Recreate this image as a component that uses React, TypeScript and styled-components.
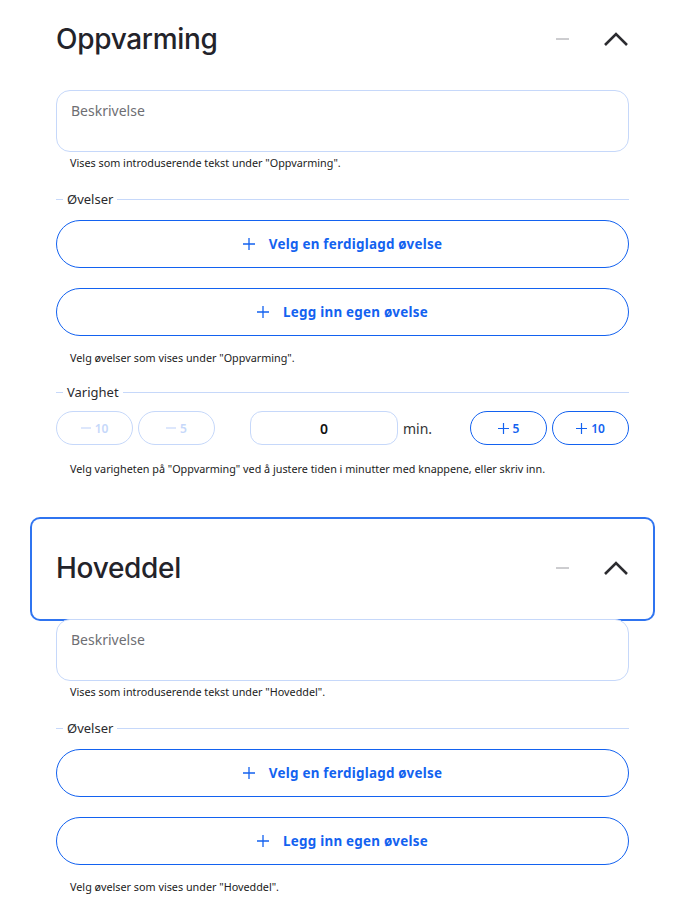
import styled, { createGlobalStyle, css } from 'styled-components';

const GlobalStyle = createGlobalStyle`
  html, body {
    margin: 0;
    padding: 0;
    background: #ffffff;
    font-family: "Noto Sans", "Open Sans", sans-serif;
    color: #1d1d1f;
  }
`;

const BLUE = '#1362f0';
const SOFT = '#c6d8fa';

const Page = styled.main`
  width: 573px;
  margin: -10px 0 0 56px;
  display: flex;
  flex-direction: column;
`;

const Section = styled.section`
  display: flex;
  flex-direction: column;
  padding-bottom: 43px;
`;

const Header = styled.div<{ $focused?: boolean }>`
  height: 100px;
  margin: 0 -24px;
  padding: 0 24px 2px 24px;
  box-sizing: border-box;
  display: flex;
  align-items: center;
  border-radius: 8px;
  ${(p) =>
    p.$focused &&
    css`
      box-shadow: 0 0 0 2px #2f74f0;
    `}
`;

const Title = styled.h2`
  flex: 1;
  margin: 0;
  font-family: Inter, "Noto Sans", sans-serif;
  font-weight: 500;
  font-size: 28px;
  letter-spacing: -0.3px;
  color: #23232a;
`;

const Controls = styled.div`
  display: flex;
  align-items: center;
  gap: 34px;
`;

const Description = styled.textarea`
  height: 62px;
  box-sizing: border-box;
  border: 1px solid ${SOFT};
  border-radius: 14px;
  padding: 10px 14px;
  resize: none;
  font-family: "Noto Sans", sans-serif;
  font-size: 14px;
  &::placeholder {
    color: #6e6e73;
  }
`;

const Help = styled.p<{ $top?: number }>`
  margin: ${(p) => p.$top ?? 4}px 0 0 14px;
  font-size: 10.8px;
  line-height: 14px;
  color: #222;
`;

const Group = styled.fieldset<{ $top: number }>`
  margin: ${(p) => p.$top}px 0 0;
  padding: 0;
  border: none;
  border-top: 1px solid ${SOFT};
  min-width: 0;
  display: flex;
  flex-direction: column;
`;

const Legend = styled.legend`
  margin-left: 7px;
  padding: 0 4px;
  font-size: 13px;
  color: #2a2a2e;
`;

const WideButton = styled.button`
  height: 48px;
  margin-top: 12px;
  & + & {
    margin-top: 20px;
  }
  border: 1px solid ${BLUE};
  border-radius: 24px;
  background: #fff;
  color: ${BLUE};
  font-family: "Noto Sans", sans-serif;
  font-weight: 700;
  font-size: 13.4px;
  letter-spacing: 0.25px;
  display: flex;
  align-items: center;
  justify-content: center;
  gap: 14px;
  cursor: pointer;
`;

const StepRow = styled.div`
  margin-top: 10px;
  height: 34px;
  display: flex;
  justify-content: space-between;
  align-items: center;
`;

const Pair = styled.div`
  display: flex;
  gap: 5px;
`;

const Step = styled.button<{ $disabled?: boolean }>`
  width: 77px;
  height: 34px;
  border-radius: 17px;
  background: #fff;
  border: 1px solid ${(p) => (p.$disabled ? SOFT : BLUE)};
  color: ${(p) => (p.$disabled ? SOFT : BLUE)};
  font-family: "Noto Sans", sans-serif;
  font-size: 12px;
  font-weight: 600;
  display: flex;
  align-items: center;
  justify-content: center;
  gap: 4px;
`;

const Duration = styled.div`
  display: flex;
  align-items: center;
  gap: 5px;
`;

const NumberInput = styled.input`
  width: 148px;
  height: 34px;
  box-sizing: border-box;
  border: 1px solid ${SOFT};
  border-radius: 12px;
  text-align: center;
  font-family: "Noto Sans", sans-serif;
  font-size: 14px;
  font-weight: 600;
  color: #111;
`;

const Unit = styled.span`
  font-size: 14px;
  color: #333;
  width: 32px;
`;

const Minus = () => (
  <svg width="13" height="2" viewBox="0 0 13 2">
    <path d="M0 1h13" stroke="#9a9aa0" strokeWidth="1" />
  </svg>
);

const Chevron = () => (
  <svg width="26" height="16" viewBox="0 0 26 16">
    <path d="M2 14 13 3l11 11" fill="none" stroke="#2c2c30" strokeWidth="2.6" />
  </svg>
);

const Plus = ({ size = 12 }: { size?: number }) => (
  <svg width={size} height={size} viewBox="0 0 12 12">
    <path d="M6 0v12M0 6h12" stroke="currentColor" strokeWidth="1.3" />
  </svg>
);

const Dash = () => (
  <svg width="10" height="10" viewBox="0 0 10 10">
    <path d="M0 5h10" stroke="currentColor" strokeWidth="1.2" />
  </svg>
);

function Block({ name, focused, duration }: { name: string; focused?: boolean; duration?: boolean }) {
  return (
    <Section>
      <Header $focused={focused}>
        <Title>{name}</Title>
        <Controls>
          <Minus />
          <Chevron />
        </Controls>
      </Header>
      <Description placeholder="Beskrivelse" />
      <Help>Vises som introduserende tekst under "{name}".</Help>
      <Group $top={20}>
        <Legend>Øvelser</Legend>
        <WideButton>
          <Plus />
          Velg en ferdiglagd øvelse
        </WideButton>
        <WideButton>
          <Plus />
          Legg inn egen øvelse
        </WideButton>
      </Group>
      <Help $top={15}>Velg øvelser som vises under "{name}".</Help>
      {duration && (
        <>
          <Group $top={18}>
            <Legend>Varighet</Legend>
            <StepRow>
              <Pair>
                <Step $disabled>
                  <Dash />10
                </Step>
                <Step $disabled>
                  <Dash />5
                </Step>
              </Pair>
              <Duration>
                <NumberInput defaultValue="0" />
                <Unit>min.</Unit>
              </Duration>
              <Pair>
                <Step>
                  <Plus size={11} />5
                </Step>
                <Step>
                  <Plus size={11} />10
                </Step>
              </Pair>
            </StepRow>
          </Group>
          <Help $top={17}>
            Velg varigheten på "{name}" ved å justere tiden i minutter med knappene, eller skriv inn.
          </Help>
        </>
      )}
    </Section>
  );
}

export default function App() {
  return (
    <>
      <GlobalStyle />
      <Page>
        <Block name="Oppvarming" duration />
        <Block name="Hoveddel" focused duration />
      </Page>
    </>
  );
}
